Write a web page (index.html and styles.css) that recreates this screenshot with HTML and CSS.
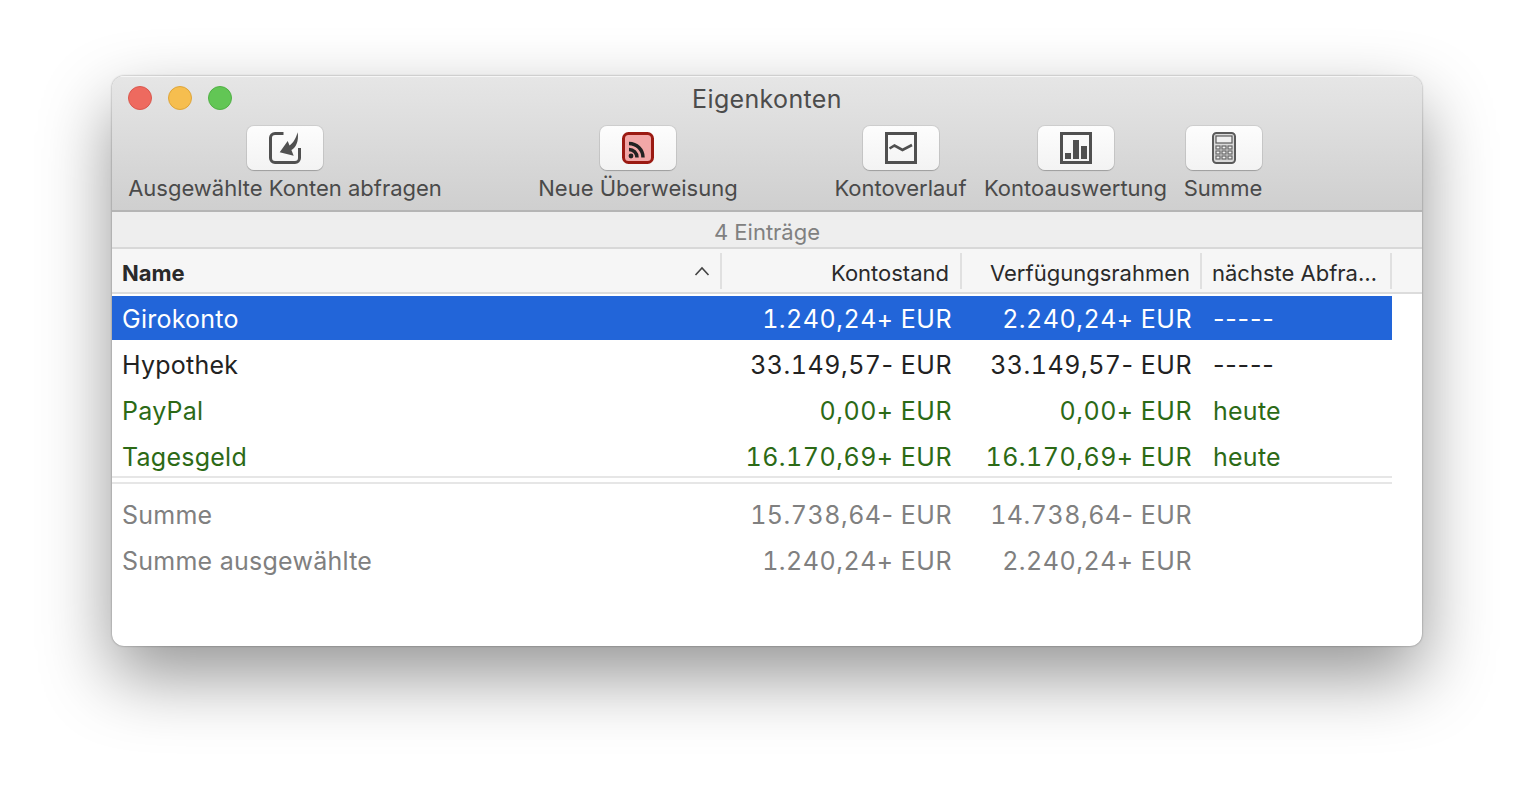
FILE: index.html
```html
<!DOCTYPE html>
<html lang="de">
<head>
<meta charset="utf-8">
<title>Eigenkonten</title>
<link rel="stylesheet" href="styles.css">
</head>
<body>
<div class="window">
  <header class="titlebar">
    <div class="title-row">
      <div class="lights"><span class="light red"></span><span class="light yellow"></span><span class="light green"></span></div>
      <div class="title">Eigenkonten</div>
    </div>
    <div class="toolbar">
      <div class="tool w1">
        <div class="btn"><svg class="ico" width="34" height="34" viewBox="0 0 34 34"><path d="M15.500 2.500H7a4.500 4.500 0 0 0-4.500 4.500v20A4.500 4.500 0 0 0 7 31.500h20a4.500 4.500 0 0 0 4.500-4.500V17" fill="none" stroke="#505050" stroke-width="3"/><path d="M11.700 21.300L19.700 10L21.500 14.500C25 12.500 28 7 29.700 1.300C31 10 28 17 23.400 19L25.700 24.700Z" fill="#505050"/></svg></div>
        <div class="label">Ausgewählte Konten abfragen</div>
      </div>
      <div class="spacer"></div>
      <div class="tool w2">
        <div class="btn"><svg class="ico" width="32" height="32" viewBox="0 0 32 32"><rect x="1.500" y="1.500" width="29" height="29" rx="5" fill="#f2a7a7" stroke="#9b1a12" stroke-width="3"/><circle cx="9" cy="24" r="2.400" fill="#222"/><path d="M7 17.500a8 8 0 0 1 8 8M7 11.500a14 14 0 0 1 14 14" fill="none" stroke="#222" stroke-width="3.500"/></svg></div>
        <div class="label">Neue Überweisung</div>
      </div>
      <div class="spacer"></div>
      <div class="tool w3">
        <div class="btn"><svg class="ico" width="32" height="32" viewBox="0 0 32 32"><rect x="1.500" y="1.500" width="29" height="29" fill="none" stroke="#505050" stroke-width="3"/><path d="M4.500 16.500l5-3 8 4.500 9.500-5" fill="none" stroke="#505050" stroke-width="2.600"/></svg></div>
        <div class="label">Kontoverlauf</div>
      </div>
      <div class="tool w4">
        <div class="btn"><svg class="ico" width="32" height="32" viewBox="0 0 32 32"><rect x="1.500" y="1.500" width="29" height="29" fill="none" stroke="#505050" stroke-width="3"/><rect x="5" y="21" width="6" height="6" fill="#505050"/><rect x="13" y="8" width="6" height="19" fill="#505050"/><rect x="21" y="14" width="6" height="13" fill="#505050"/></svg></div>
        <div class="label">Kontoauswertung</div>
      </div>
      <div class="tool w5">
        <div class="btn"><svg class="ico" width="24" height="32" viewBox="0 0 24 32"><rect x="1" y="1" width="22" height="30" rx="3.500" fill="#d9d9d9" stroke="#5a5a5a" stroke-width="2"/><rect x="4" y="4" width="16" height="7" fill="#efefef" stroke="#5a5a5a" stroke-width="1.200"/><g fill="#efefef" stroke="#666" stroke-width="1.200"><rect x="4" y="14" width="4" height="3"/><rect x="10" y="14" width="4" height="3"/><rect x="16" y="14" width="4" height="3"/><rect x="4" y="19" width="4" height="3"/><rect x="10" y="19" width="4" height="3"/><rect x="16" y="19" width="4" height="3"/><rect x="4" y="24" width="4" height="3"/><rect x="10" y="24" width="4" height="3"/><rect x="16" y="24" width="4" height="3"/></g></svg></div>
        <div class="label">Summe</div>
      </div>
    </div>
  </header>
  <div class="countbar">4 Einträge</div>
  <div class="thead">
    <div class="th c1 name">Name<svg class="sort" width="16" height="10" viewBox="0 0 16 10"><path d="M1.500 9L8 2l6.500 7" fill="none" stroke="#444" stroke-width="1.600"/></svg></div>
    <div class="th c2 sep tight">Kontostand</div>
    <div class="th c3 sep">Verfügungsrahmen</div>
    <div class="th c4 sep left">nächste Abfra…</div>
  </div>
  <div class="tbody">
    <div class="row selected"><div class="c1 cell">Girokonto</div><div class="c2 cell num">1.240,24+ EUR</div><div class="c3 cell num">2.240,24+ EUR</div><div class="c4 cell last dash">-----</div></div>
    <div class="row"><div class="c1 cell">Hypothek</div><div class="c2 cell num">33.149,57<span class="sign">-</span> EUR</div><div class="c3 cell num">33.149,57<span class="sign">-</span> EUR</div><div class="c4 cell last dash">-----</div></div>
    <div class="row pos"><div class="c1 cell">PayPal</div><div class="c2 cell num">0,00+ EUR</div><div class="c3 cell num">0,00+ EUR</div><div class="c4 cell last">heute</div></div>
    <div class="row pos"><div class="c1 cell">Tagesgeld</div><div class="c2 cell num">16.170,69+ EUR</div><div class="c3 cell num">16.170,69+ EUR</div><div class="c4 cell last">heute</div></div>
    <div class="double"></div>
    <div class="row sum"><div class="c1 cell">Summe</div><div class="c2 cell num">15.738,64<span class="sign">-</span> EUR</div><div class="c3 cell num">14.738,64<span class="sign">-</span> EUR</div><div class="c4 cell last"></div></div>
    <div class="row sum"><div class="c1 cell">Summe ausgewählte</div><div class="c2 cell num">1.240,24+ EUR</div><div class="c3 cell num">2.240,24+ EUR</div><div class="c4 cell last"></div></div>
  </div>
</div>
</body>
</html>
```
FILE: styles.css
```css
* { box-sizing: border-box; }
html, body { margin: 0; height: 100%; background: #fff; overflow: hidden; }
body { padding: 76px 112px 0; font-family: Inter, "Liberation Sans", sans-serif; }

.window {
  width: 1310px;
  height: 570px;
  background: #fff;
  border-radius: 12px;
  overflow: hidden;
  box-shadow: 0 0 2px rgba(0,0,0,.45), 0 30px 70px rgba(0,0,0,.42);
}

.titlebar {
  height: 136px;
  background: linear-gradient(#e6e6e6, #cfcfcf);
  border-bottom: 2px solid #b5b5b5;
  box-shadow: inset 0 1px 0 #f6f6f6;
}
.title-row { display: flex; align-items: center; height: 44px; padding-left: 16px; }
.lights { display: flex; gap: 16px; width: 104px; }
.light { width: 24px; height: 24px; border-radius: 50%; }
.red { background: #ee6a5f; border: 1px solid #d9584e; }
.yellow { background: #f6be4f; border: 1px solid #dea53a; }
.green { background: #62c655; border: 1px solid #51b045; }
.title { flex: 1; margin-right: 120px; text-align: center; font-size: 25px; letter-spacing: .35px; color: #4c4c4c; padding-top: 2px; }

.toolbar { display: flex; padding: 6px 0 0 16px; }
.tool { display: flex; flex-direction: column; align-items: center; }
.w1 { width: 314px; }
.w2 { width: 198px; }
.w3 { width: 133px; margin-right: 17px; }
.w4 { width: 183px; margin-right: 17px; }
.w5 { width: 78px; }
.w5 .btn { margin-left: 2px; }
.spacer { width: 97px; }
.btn {
  width: 76px; height: 44px;
  display: flex; align-items: center; justify-content: center;
  background: linear-gradient(#fdfdfd, #f3f3f3);
  border-radius: 7px;
  box-shadow: 0 0 0 1px rgba(0,0,0,.07), 0 1px 1px rgba(0,0,0,.2);
}
.label { margin-top: 4px; font-size: 22px; line-height: 28px; color: #4a4a4a; white-space: nowrap; }

.countbar {
  height: 37px; background: #eeeeee; border-bottom: 2px solid #d8d8d8;
  text-align: center; font-size: 22px; line-height: 40px; color: #808080;
}

.thead { display: flex; height: 45px; background: #f6f6f6; border-bottom: 2px solid #dcdcdc; padding-top: 4px; }
.th { font-size: 22px; line-height: 40px; height: 36px; color: #2a2a2a; padding: 0 10px; text-align: right; white-space: nowrap; }
.sep { border-left: 2px solid #e0e0e0; }
.tight { padding-right: 11px; }
.name { display: flex; justify-content: space-between; align-items: center; font-weight: 700; line-height: 1; padding-top: 4px; }
.sort { margin-bottom: 5px; }
.left { text-align: left; border-right: 2px solid #e0e0e0; }

.c1 { width: 608px; }
.c2 { width: 240px; }
.c3 { width: 240px; }
.c4 { width: 192px; }

.tbody { width: 1280px; padding-top: 2px; }
.row { display: flex; height: 46px; font-size: 25px; line-height: 46px; letter-spacing: .25px; color: #222; }
.cell { padding: 0 8px 0 10px; white-space: nowrap; }
.last { padding-left: 13px; }
.dash { letter-spacing: .8px; }
.num { text-align: right; letter-spacing: .5px; font-feature-settings: "tnum"; }
.sign { font-feature-settings: normal; }
.selected { height: 44px; margin-bottom: 2px; background: #2265d9; color: #fff; }
.pos { color: #2c6a16; }
.sum { color: #808080; }
.double { height: 8px; border-top: 2px solid #e6e6e6; border-bottom: 2px solid #e6e6e6; margin-bottom: 8px; margin-top: -4px; }
```
